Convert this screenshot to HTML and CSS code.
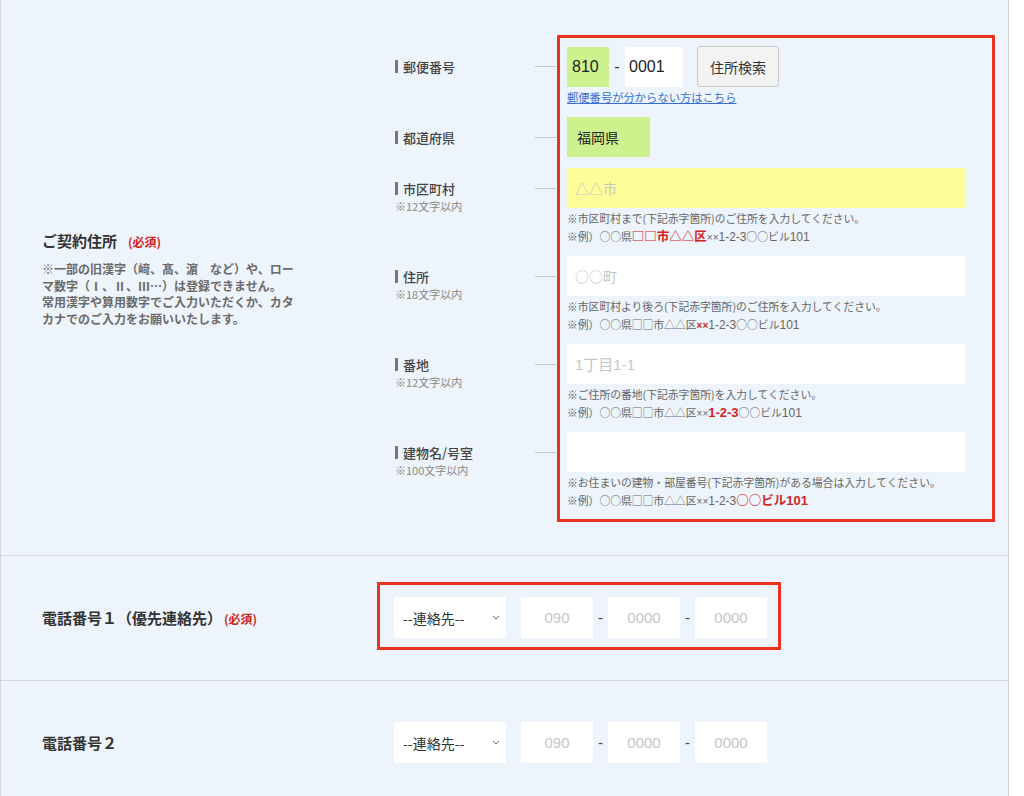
FILE: index.html
```html
<!DOCTYPE html>
<html lang="ja">
<head>
<meta charset="utf-8">
<title>ご契約情報</title>
<link rel="stylesheet" href="styles.css">
</head>
<body>
<div class="form">
  <div class="row row-address">
    <div class="row-head">
      <div class="head-block">
        <h3 class="title">ご契約住所<span class="req req-gap">(必須)</span></h3>
        <p class="desc">※一部の旧漢字（﨑、髙、濵　など）や、ロー<br>マ数字（Ⅰ、Ⅱ、Ⅲ…）は登録できません。<br>常用漢字や算用数字でご入力いただくか、カタ<br>カナでのご入力をお願いいたします。</p>
      </div>
    </div>
    <div class="row-body addr">
      <div class="sub sub-zip">
        <div class="sub-label">
          <div class="sub-main"><span class="bar"></span>郵便番号<span class="conn"></span></div>
        </div>
        <div class="sub-field">
          <div class="zip">
            <input class="in in-green zip1" value="810">
            <span class="dash">-</span>
            <input class="in zip2" value="0001">
            <button class="btn" type="button">住所検索</button>
          </div>
          <a class="link" href="#">郵便番号が分からない方はこちら</a>
        </div>
      </div>
      <div class="sub">
        <div class="sub-label">
          <div class="sub-main"><span class="bar"></span>都道府県<span class="conn"></span></div>
        </div>
        <div class="sub-field">
          <div class="pref">福岡県</div>
        </div>
      </div>
      <div class="sub">
        <div class="sub-label">
          <div class="sub-main"><span class="bar"></span>市区町村<span class="conn"></span></div>
          <div class="note">※12文字以内</div>
        </div>
        <div class="sub-field">
          <input class="in wide in-yellow" placeholder="△△市">
          <p class="help">※市区町村まで(下記赤字箇所)のご住所を入力してください。<br>※例）○○県<span class="hl">□□市△△区</span><span class="x">××</span><span class="d">1-2-3</span>○○ビル<span class="d">101</span></p>
        </div>
      </div>
      <div class="sub">
        <div class="sub-label">
          <div class="sub-main"><span class="bar"></span>住所<span class="conn"></span></div>
          <div class="note">※18文字以内</div>
        </div>
        <div class="sub-field">
          <input class="in wide" placeholder="○○町">
          <p class="help">※市区町村より後ろ(下記赤字箇所)のご住所を入力してください。<br>※例）○○県□□市△△区<span class="hl x">××</span><span class="d">1-2-3</span>○○ビル<span class="d">101</span></p>
        </div>
      </div>
      <div class="sub">
        <div class="sub-label">
          <div class="sub-main"><span class="bar"></span>番地<span class="conn"></span></div>
          <div class="note">※12文字以内</div>
        </div>
        <div class="sub-field">
          <input class="in wide num" placeholder="1丁目1-1">
          <p class="help">※ご住所の番地(下記赤字箇所)を入力してください。<br>※例）○○県□□市△△区<span class="x">××</span><span class="hl d">1-2-3</span>○○ビル<span class="d">101</span></p>
        </div>
      </div>
      <div class="sub sub-last">
        <div class="sub-label">
          <div class="sub-main"><span class="bar"></span>建物名/号室<span class="conn"></span></div>
          <div class="note">※100文字以内</div>
        </div>
        <div class="sub-field">
          <input class="in wide">
          <p class="help">※お住まいの建物・部屋番号(下記赤字箇所)がある場合は入力してください。<br>※例）○○県□□市△△区<span class="x">××</span><span class="d">1-2-3</span><span class="hl">○○ビル<span class="d">101</span></span></p>
        </div>
      </div>
      <div class="annot annot-addr"></div>
    </div>
  </div>

  <div class="row row-tel">
    <div class="row-head">
      <h3 class="title">電話番号１（優先連絡先）<span class="req">(必須)</span></h3>
    </div>
    <div class="row-body">
      <div class="tel">
        <div class="select"><span>--連絡先--</span><svg class="chev" width="8" height="5" viewBox="0 0 8 5"><path d="M1 1l3 3 3-3" fill="none" stroke="#666" stroke-width="1"/></svg></div>
        <input class="in telin" placeholder="090">
        <span class="tdash">-</span>
        <input class="in telin" placeholder="0000">
        <span class="tdash">-</span>
        <input class="in telin" placeholder="0000">
        <div class="annot annot-tel"></div>
      </div>
    </div>
  </div>

  <div class="row row-tel row-last">
    <div class="row-head">
      <h3 class="title">電話番号２</h3>
    </div>
    <div class="row-body">
      <div class="tel">
        <div class="select"><span>--連絡先--</span><svg class="chev" width="8" height="5" viewBox="0 0 8 5"><path d="M1 1l3 3 3-3" fill="none" stroke="#666" stroke-width="1"/></svg></div>
        <input class="in telin" placeholder="090">
        <span class="tdash">-</span>
        <input class="in telin" placeholder="0000">
        <span class="tdash">-</span>
        <input class="in telin" placeholder="0000">
      </div>
    </div>
  </div>
</div>
</body>
</html>
```

FILE: styles.css
```css
html, body {
  margin: 0;
  padding: 0;
  background: #fff;
}
body {
  font-family: "Noto Sans CJK JP", sans-serif;
  color: #333;
  overflow: hidden;
}
.form {
  width: 1009px;
  box-sizing: border-box;
  background: #edf4fb;
  border-left: 1px solid #d3d8dd;
  border-right: 1px solid #cdd2d7;
  min-height: 796px;
}
.row {
  display: flex;
  border-bottom: 1px solid #d2d6da;
}
.row-last {
  border-bottom: 0;
}
.row-head {
  width: 393px;
  flex: none;
  box-sizing: border-box;
  padding-left: 41px;
  display: flex;
  align-items: center;
}
.head-block {
  margin-top: 2px;
}
.title {
  margin: 0;
  font-size: 15px;
  line-height: 22px;
  font-weight: 700;
  color: #333;
  white-space: nowrap;
}
.req {
  color: #d0231c;
  font-size: 12px;
  font-weight: 700;
  margin-left: 2px;
}
.req-gap {
  margin-left: 11px;
}
.desc {
  margin: 8px 0 0;
  font-size: 12px;
  line-height: 16.5px;
  font-weight: 700;
  color: #6a6a6a;
  white-space: nowrap;
}

/* address block */
.row-body {
  flex: 1;
}
.addr {
  position: relative;
  padding: 46px 0;
}
.sub {
  display: flex;
  margin-bottom: 11px;
}
.sub-zip {
  margin-bottom: 10px;
}
.sub-last {
  margin-bottom: 0;
}
.sub-label {
  width: 173px;
  flex: none;
}
.sub-main {
  height: 40px;
  display: flex;
  align-items: center;
  font-size: 13px;
  font-weight: 500;
  color: #444;
  padding-left: 1px;
  padding-right: 10px;
  white-space: nowrap;
}
.bar {
  width: 3px;
  height: 13px;
  background: #777;
  margin-right: 5px;
  flex: none;
}
.conn {
  margin-left: auto;
  width: 22px;
  height: 1px;
  background: #c3c8cd;
  flex: none;
}
.note {
  margin-top: -10px;
  padding-left: 1px;
  font-size: 11px;
  line-height: 16px;
  color: #888;
}
.sub-field {
  width: 398px;
  flex: none;
}
.in {
  display: block;
  border: 0;
  outline: none;
  height: 40px;
  box-sizing: border-box;
  padding: 0 8px;
  margin: 0;
  background: #fff;
  font-family: "Noto Sans CJK JP", sans-serif;
  font-size: 14px;
  color: #222;
  border-radius: 0;
}
.in::placeholder {
  color: #c6c6c6;
}
.in-green {
  background: #cdf28d;
}
.in-yellow {
  background: #fffd99;
}
.wide {
  width: 398px;
}
.num {
  font-family: "Liberation Sans", "Noto Sans CJK JP", sans-serif;
  font-size: 15px;
}
.zip {
  display: flex;
  align-items: center;
}
.zip1 {
  width: 42px;
  padding: 0 5px;
  font-family: "Liberation Sans", sans-serif;
  font-size: 16px;
}
.zip2 {
  width: 58px;
  padding: 0 4px;
  font-family: "Liberation Sans", sans-serif;
  font-size: 16px;
}
.dash {
  width: 16px;
  text-align: center;
  font-family: "Liberation Sans", sans-serif;
  font-size: 16px;
  color: #333;
}
.btn {
  margin-left: 14px;
  width: 82px;
  height: 41px;
  background: #f3f3f3;
  border: 1px solid #c9c9c9;
  border-radius: 3px;
  font-family: "Noto Sans CJK JP", sans-serif;
  font-size: 14px;
  color: #333;
  padding: 0;
}
.link {
  display: block;
  font-size: 11.3px;
  line-height: 20px;
  color: #3a6fd2;
  text-decoration: underline;
  white-space: nowrap;
}
.pref {
  width: 83px;
  height: 40px;
  box-sizing: border-box;
  padding-left: 10px;
  line-height: 40px;
  background: #cdf28d;
  font-size: 14px;
  color: #222;
}
.help {
  margin: 1px 0 0;
  font-size: 10.8px;
  line-height: 18px;
  color: #666;
  white-space: nowrap;
}
.help span {
  line-height: 1;
}
.help .d {
  font-family: "Liberation Sans", sans-serif;
  font-size: 12px;
}
.help .x {
  font-family: "Liberation Sans", sans-serif;
  font-size: 10px;
}
.hl {
  color: #d2231d;
  font-weight: 700;
  font-size: 12.5px;
}
.help .hl.d {
  font-size: 13px;
}
.help .hl .d {
  font-size: 13px;
}

/* annotation frames */
.annot {
  position: absolute;
  border: 3px solid #ea3220;
  box-sizing: border-box;
  pointer-events: none;
}
.annot-addr {
  left: 163px;
  top: 35px;
  width: 438px;
  height: 487px;
}

/* telephone rows */
.row-tel .row-body {
  padding: 41px 0 42px;
}
.row-last .row-body {
  padding-bottom: 41px;
}
.tel {
  position: relative;
  display: inline-flex;
  align-items: center;
}
.select {
  width: 112px;
  height: 41px;
  box-sizing: border-box;
  background: #fff;
  padding: 0 6px 0 9px;
  display: flex;
  align-items: center;
  justify-content: space-between;
  font-size: 14px;
  color: #333;
  margin-right: 15px;
}
.chev {
  display: block;
}
.telin {
  width: 72px;
  height: 41px;
  text-align: center;
  font-family: "Liberation Sans", sans-serif;
  font-size: 15px;
}
.tdash {
  width: 15px;
  text-align: center;
  font-family: "Liberation Sans", sans-serif;
  font-size: 15px;
  color: #444;
}
.annot-tel {
  top: -15px;
  right: -14px;
  bottom: -12px;
  left: -17px;
}
```
